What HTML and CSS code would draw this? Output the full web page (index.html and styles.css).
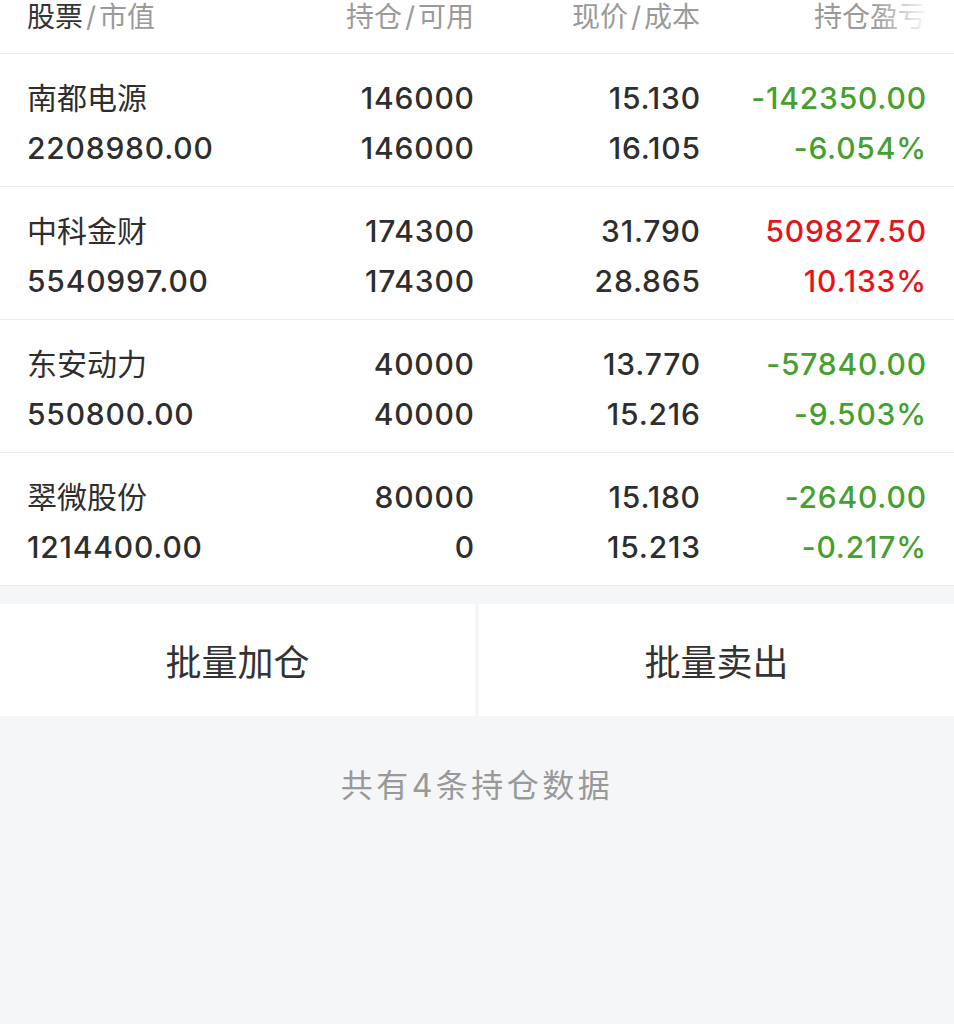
FILE: index.html
```html
<!DOCTYPE html>
<html lang="zh-CN">
<head>
  <meta charset="UTF-8" />
  <meta name="viewport" content="width=device-width, initial-scale=1.0"/>
  <title>持仓</title>
  <link rel="stylesheet" href="styles.css">
</head>
<body>
  <div class="positions">
    <div class="thead">
      <div class="th"><span class="strong">股票</span><i>/</i>市值</div>
      <div class="th num">持仓<i>/</i>可用</div>
      <div class="th num">现价<i>/</i>成本</div>
      <div class="th num">持仓盈亏</div>
    </div>

    <div class="row">
      <div class="cell"><p class="name">南都电源</p><p>2208980.00</p></div>
      <div class="cell num"><p>146000</p><p>146000</p></div>
      <div class="cell num"><p>15.130</p><p>16.105</p></div>
      <div class="cell num down"><p>-142350.00</p><p>-6.054%</p></div>
    </div>
    <div class="row">
      <div class="cell"><p class="name">中科金财</p><p>5540997.00</p></div>
      <div class="cell num"><p>174300</p><p>174300</p></div>
      <div class="cell num"><p>31.790</p><p>28.865</p></div>
      <div class="cell num up"><p>509827.50</p><p>10.133%</p></div>
    </div>
    <div class="row">
      <div class="cell"><p class="name">东安动力</p><p>550800.00</p></div>
      <div class="cell num"><p>40000</p><p>40000</p></div>
      <div class="cell num"><p>13.770</p><p>15.216</p></div>
      <div class="cell num down"><p>-57840.00</p><p>-9.503%</p></div>
    </div>
    <div class="row">
      <div class="cell"><p class="name">翠微股份</p><p>1214400.00</p></div>
      <div class="cell num"><p>80000</p><p>0</p></div>
      <div class="cell num"><p>15.180</p><p>15.213</p></div>
      <div class="cell num down"><p>-2640.00</p><p>-0.217%</p></div>
    </div>
  </div>

  <div class="actions">
    <button type="button">批量加仓</button>
    <button type="button">批量卖出</button>
  </div>

  <p class="summary">共有4条持仓数据</p>
</body>
</html>
```

FILE: styles.css
```css
body {
  margin: 0;
  background: #f5f6f8;
  color: #2e2e2e;
  font-family: Inter, "Noto Sans CJK SC", sans-serif;
}
p {
  margin: 0;
}
.positions {
  background: #fff;
}
.thead, .row {
  display: grid;
  grid-template-columns: 221px 226px 226px 226px;
  padding: 0 28px 0 27px;
  border-bottom: 1px solid #ececec;
}
.thead {
  position: relative;
  height: 53px;
  font-size: 28px;
  line-height: 34px;
  color: #9a9a9a;
}
.thead::after {
  content: "";
  position: absolute;
  top: 0;
  right: 0;
  width: 80px;
  height: 40px;
  background: linear-gradient(to right, rgba(255,255,255,0), #fff 70%);
}
.th i {
  font-style: normal;
  margin: 0 3px;
}
.th .strong {
  color: #333;
}
.num {
  text-align: right;
}
.row {
  height: 113px;
  padding-top: 19px;
  font-size: 30px;
  line-height: 50px;
  font-weight: 500;
}
.row p {
  letter-spacing: 0.8px;
}
.num p {
  margin-right: -0.8px;
}
.row .name {
  font-weight: 400;
  letter-spacing: 0;
}
.down {
  color: #44a02f;
}
.up {
  color: #e5141b;
}
.actions {
  display: flex;
  gap: 4px;
  margin-top: 18px;
}
.actions button {
  flex: 1;
  height: 112px;
  border: 0;
  background: #fff;
  color: #333;
  font-family: "Noto Sans CJK SC", sans-serif;
  font-size: 36px;
}
.summary {
  margin-top: 50px;
  text-align: center;
  font-size: 32px;
  line-height: 40px;
  color: #999;
  letter-spacing: 3.5px;
}
```
